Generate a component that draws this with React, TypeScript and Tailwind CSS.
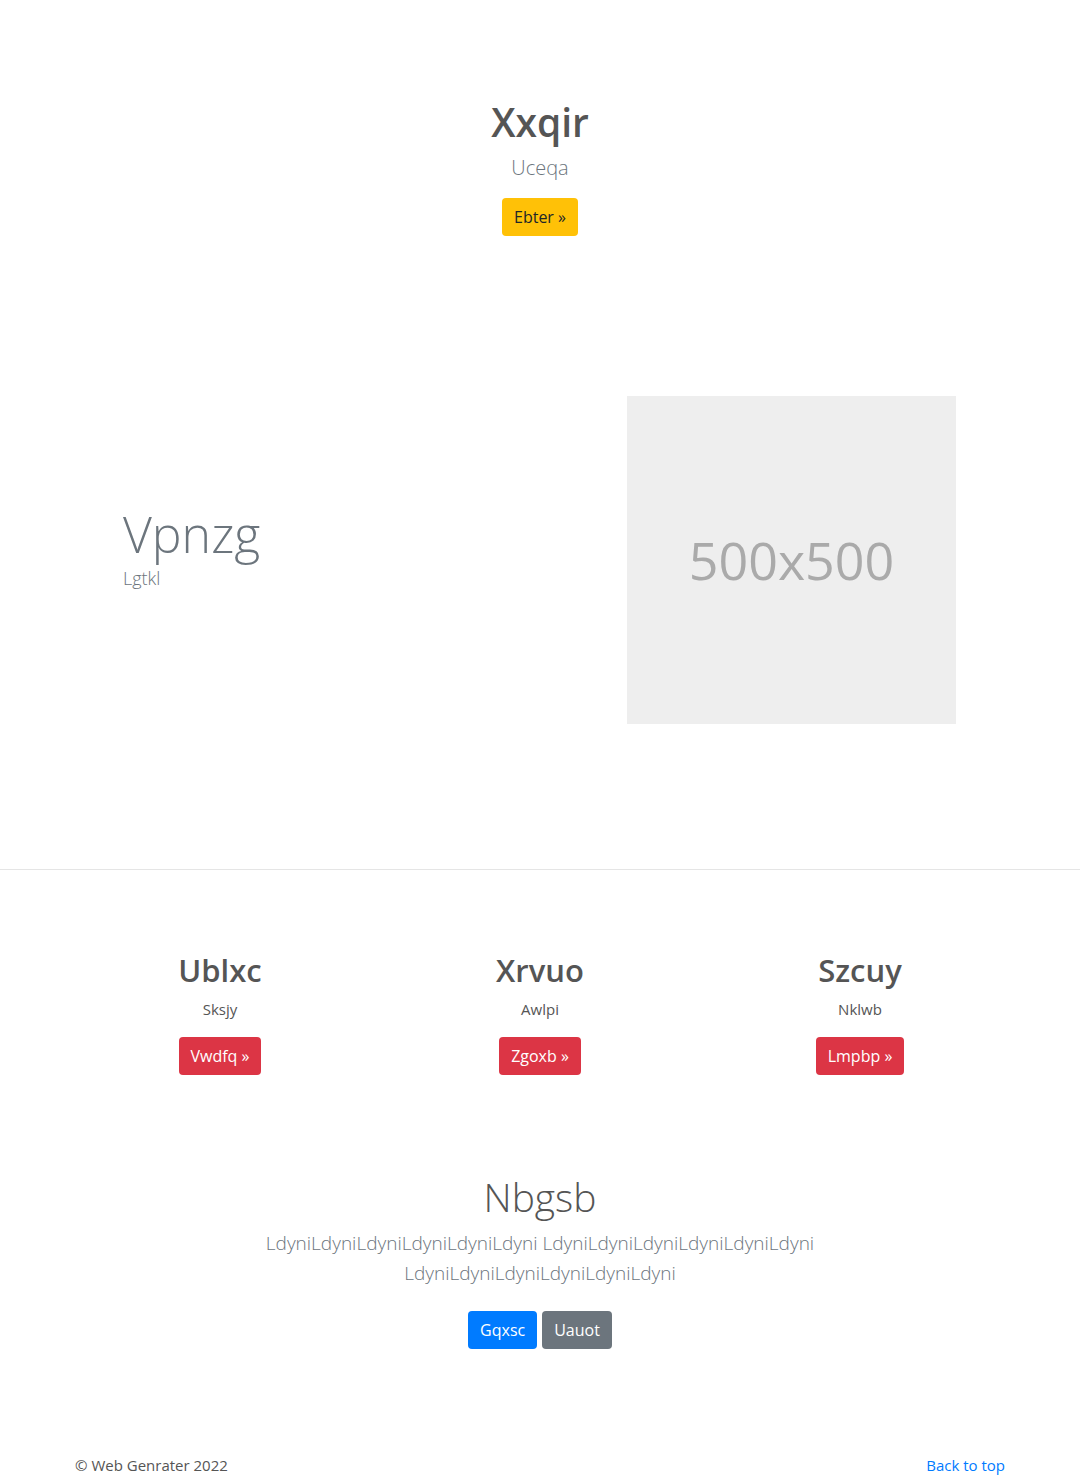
const font = "font-['Segoe_UI','Open_Sans','Noto_Sans',sans-serif]"

function Btn(props: { label: string; className: string }) {
  return (
    <a
      href="#"
      className={
        "inline-block rounded-[4px] px-3 py-[7px] text-[16px] leading-[24px] " + props.className
      }
    >
      {props.label}
    </a>
  )
}

const features = [
  { title: "Ublxc", sub: "Sksjy", btn: "Vwdfq »" },
  { title: "Xrvuo", sub: "Awlpi", btn: "Zgoxb »" },
  { title: "Szcuy", sub: "Nklwb", btn: "Lmpbp »" },
]

export default function App() {
  return (
    <div className={"min-h-screen bg-white text-[#212529] " + font}>
      {/* hero */}
      <section className="pt-[98px] text-center">
        <h1 className="text-[39px] font-semibold leading-[48px] text-[#555]">Xxqir</h1>
        <p className="mt-[7px] text-[20px] font-light leading-[30px] text-[#6c757d]">Uceqa</p>
        <div className="mt-[15px]">
          <Btn label="Ebter »" className="bg-[#ffc107] text-[#212529]" />
        </div>
      </section>

      {/* split feature */}
      <section className="mx-auto mt-[160px] grid w-[960px] grid-cols-2 items-center">
        <div className="pb-[25px] pl-[63px]">
          <h2 className="text-[50px] font-light leading-[60px] text-[#6c757d]">Vpnzg</h2>
          <p className="text-[18px] font-light leading-[28px] text-[#6c757d]">Lgtkl</p>
        </div>
        <div className="pl-[87px]">
          <div className="flex h-[328px] w-[329px] items-center justify-center bg-[#eee]">
            <span className="text-[52px] leading-none text-[#aaa]">500x500</span>
          </div>
        </div>
      </section>

      <hr className="mt-[145px] border-t border-[#e5e5e5]" />

      {/* three columns */}
      <section className="mx-auto mt-[81px] grid w-[960px] grid-cols-3 text-center">
        {features.map((f, idx) => (
          <div key={idx}>
            <h3 className="text-[31px] font-semibold leading-[38px] text-[#555]">{f.title}</h3>
            <p className="mt-[8px] text-[15px] leading-[24px] text-[#555]">{f.sub}</p>
            <div className="mt-[16px]">
              <Btn label={f.btn} className="bg-[#dc3545] text-white" />
            </div>
          </div>
        ))}
      </section>

      {/* callout */}
      <section className="mt-[98px] text-center">
        <h2 className="text-[39px] font-light leading-[48px] text-[#555]">Nbgsb</h2>
        <p className="mx-auto mt-[7px] max-w-[610px] text-[19px] font-light leading-[30px] text-[#6c757d]">
          LdyniLdyniLdyniLdyniLdyniLdyni LdyniLdyniLdyniLdyniLdyniLdyni LdyniLdyniLdyniLdyniLdyniLdyni
        </p>
        <div className="mt-[23px] flex justify-center gap-[5px]">
          <Btn label="Gqxsc" className="bg-[#007bff] text-white" />
          <Btn label="Uauot" className="bg-[#6c757d] text-white" />
        </div>
      </section>

      {/* footer */}
      <footer className="mx-auto mt-[104px] flex w-[930px] justify-between text-[15px] leading-[24px]">
        <p className="text-[#555]">© Web Genrater 2022</p>
        <a href="#" className="text-[#007bff]">
          Back to top
        </a>
      </footer>
    </div>
  )
}
